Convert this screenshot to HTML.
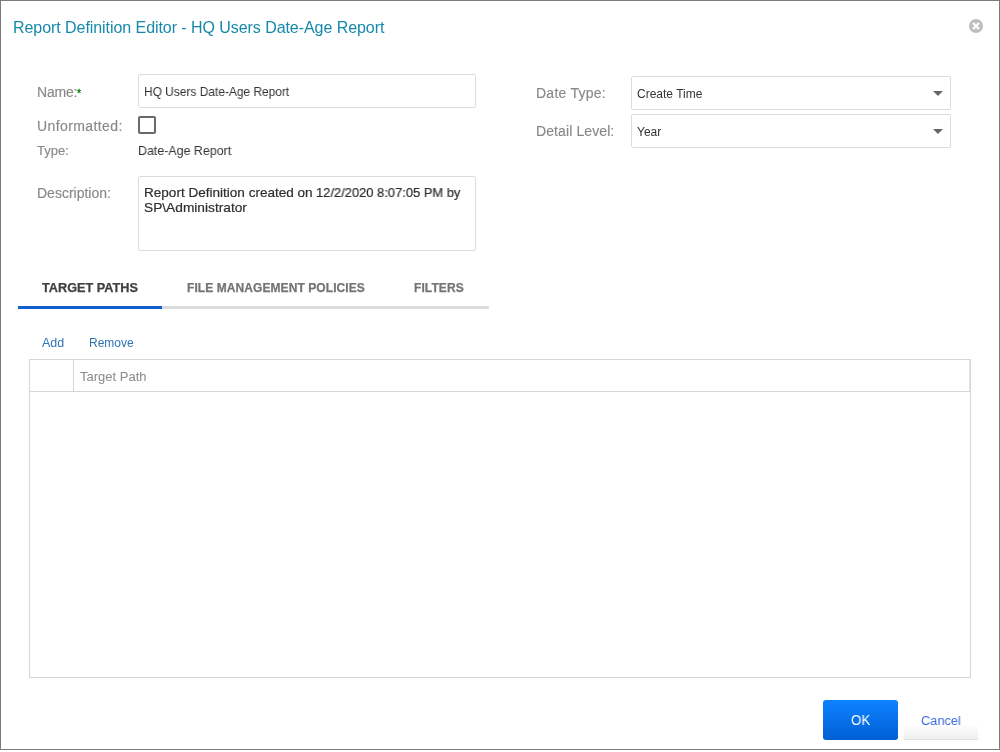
<!DOCTYPE html>
<html><head><meta charset="utf-8">
<style>
html,body{margin:0;padding:0;width:1000px;height:752px;background:#fff;overflow:hidden;}
body{font-family:"Liberation Sans",sans-serif;position:relative;}
.win{position:absolute;left:0;top:0;width:998px;height:748px;border:1px solid #7b7b7b;background:#fff;}
.t{position:absolute;white-space:nowrap;line-height:1;will-change:transform;}
.desc{font-size:13.2px;color:#2e2e2e;-webkit-text-stroke:0.2px #2e2e2e;}
.box{position:absolute;box-sizing:border-box;border:1px solid #dcdcdc;border-radius:2px;background:#fff;}
</style></head>
<body>
<div class="win"></div>

<!-- title -->
<div class="t" style="left:13px;top:20px;font-size:16px;letter-spacing:-0.06px;color:#1689aa;">Report Definition Editor - HQ Users Date-Age Report</div>
<!-- close icon -->
<svg style="position:absolute;left:968px;top:18px" width="16" height="16" viewBox="0 0 16 16">
  <circle cx="8" cy="8" r="7" fill="#bdbdbd"/>
  <path d="M5 5 L11 11 M11 5 L5 11" stroke="#fff" stroke-width="2.4" stroke-linecap="butt"/>
</svg>

<!-- left form -->
<div class="t" style="left:37px;top:85px;font-size:14px;letter-spacing:-0.2px;color:#888;-webkit-text-stroke:0.15px #888;">Name:<span style="color:#0e840e;font-size:10.5px;vertical-align:0px;margin-left:-0.3px;-webkit-text-stroke:0.35px #0e840e">*</span></div>
<div class="box" style="left:138px;top:74px;width:338px;height:34px;"></div>
<div class="t" style="left:144px;top:85px;font-size:13px;color:#333;transform:scaleX(0.918);transform-origin:0 0;">HQ Users Date-Age Report</div>

<div class="t" style="left:37px;top:119px;font-size:14px;letter-spacing:0.4px;color:#888;-webkit-text-stroke:0.15px #888;">Unformatted:</div>
<div style="position:absolute;left:138px;top:116px;width:18px;height:18px;box-sizing:border-box;border:2px solid #696969;border-radius:2px;"></div>

<div class="t" style="left:37px;top:144px;font-size:13px;color:#888;-webkit-text-stroke:0.15px #888;">Type:</div>
<div class="t" style="left:138px;top:144px;font-size:13px;color:#333;transform:scaleX(0.955);transform-origin:0 0;">Date-Age Report</div>

<div class="t" style="left:37px;top:186px;font-size:14px;color:#888;-webkit-text-stroke:0.15px #888;">Description:</div>
<div class="box" style="left:138px;top:176px;width:338px;height:75px;"></div>
<div class="t desc" style="left:144px;top:186px;transform:scaleX(1.027);transform-origin:0 0;">Report Definition created on</div>
<div class="t desc" style="left:316px;top:186px;transform:scaleX(0.98);transform-origin:0 0;">12/2/2020 8:07:05 PM by</div>
<div class="t desc" style="left:144px;top:201px;transform:scaleX(1.04);transform-origin:0 0;">SP\Administrator</div>

<!-- right form -->
<div class="t" style="left:536px;top:86px;font-size:14px;letter-spacing:0.25px;color:#888;-webkit-text-stroke:0.15px #888;">Date Type:</div>
<div class="box" style="left:631px;top:76px;width:320px;height:34px;"></div>
<div class="t" style="left:637px;top:88px;font-size:12px;color:#333;">Create Time</div>
<svg style="position:absolute;left:933px;top:91px" width="10" height="5"><path d="M0 0 L10 0 L5 5Z" fill="#666"/></svg>

<div class="t" style="left:536px;top:124px;font-size:14px;letter-spacing:0.1px;color:#888;-webkit-text-stroke:0.15px #888;">Detail Level:</div>
<div class="box" style="left:631px;top:114px;width:320px;height:34px;"></div>
<div class="t" style="left:637px;top:126px;font-size:12px;color:#333;">Year</div>
<svg style="position:absolute;left:933px;top:129px" width="10" height="5"><path d="M0 0 L10 0 L5 5Z" fill="#666"/></svg>

<!-- tabs -->
<div style="position:absolute;left:18px;top:306px;width:471px;height:3px;background:#dcdcdc;"></div>
<div style="position:absolute;left:18px;top:306px;width:144px;height:3px;background:#1260d0;"></div>
<div class="t" style="left:42px;top:282px;font-size:12.7px;font-weight:bold;color:#404040;-webkit-text-stroke:0.25px #404040;">TARGET PATHS</div>
<div class="t" style="left:187px;top:282px;font-size:12px;letter-spacing:0.08px;font-weight:bold;color:#747474;-webkit-text-stroke:0.25px #747474;">FILE MANAGEMENT POLICIES</div>
<div class="t" style="left:414px;top:282px;font-size:12px;letter-spacing:0.1px;font-weight:bold;color:#747474;-webkit-text-stroke:0.25px #747474;">FILTERS</div>

<!-- toolbar -->
<div class="t" style="left:42px;top:337px;font-size:12.5px;color:#2f73b5;">Add</div>
<div class="t" style="left:89px;top:337px;font-size:12px;color:#2f73b5;">Remove</div>

<!-- table -->
<div style="position:absolute;left:29px;top:359px;width:942px;height:319px;box-sizing:border-box;border:1px solid #d6d6d6;"></div>
<div style="position:absolute;left:29px;top:391px;width:942px;height:1px;background:#d6d6d6;"></div>
<div style="position:absolute;left:73px;top:359px;width:1px;height:33px;background:#d6d6d6;"></div>
<div style="position:absolute;left:969px;top:360px;width:1px;height:31px;background:#e2e2e2;"></div>
<div class="t" style="left:80px;top:370px;font-size:13px;color:#8a8a8a;">Target Path</div>

<!-- buttons -->
<div style="position:absolute;left:823px;top:700px;width:75px;height:40px;border-radius:3px;background:linear-gradient(#0e82ff,#0060d4);"></div>
<div class="t" style="left:851px;top:713px;font-size:14px;color:#fff;transform:scaleX(0.95);transform-origin:0 0;">OK</div>
<div style="position:absolute;left:904px;top:724px;width:74px;height:15px;background:linear-gradient(#fff,#efefef);border-bottom:1px solid #e0e0e0;"></div>
<div class="t" style="left:921px;top:714px;font-size:13.6px;color:#3d6ae0;transform:scaleX(0.94);transform-origin:0 0;">Cancel</div>

</body></html>
